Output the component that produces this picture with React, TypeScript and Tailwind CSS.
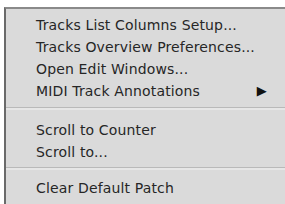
const groups: { label: string; sub?: boolean }[][] = [
  [
    { label: 'Tracks List Columns Setup...' },
    { label: 'Tracks Overview Preferences...' },
    { label: 'Open Edit Windows...' },
    { label: 'MIDI Track Annotations', sub: true },
  ],
  [{ label: 'Scroll to Counter' }, { label: 'Scroll to...' }],
  [{ label: 'Clear Default Patch' }],
];

function Separator({ second }: { second?: boolean }) {
  return (
    <div
      className={
        second
          ? 'h-[3px] mt-[4px] mb-[7px] border-t border-[#b9b9b9] bg-[#e6e6e6]'
          : 'h-[3px] mt-[5px] mb-[9px] border-t border-[#b9b9b9] bg-[#e6e6e6]'
      }
    />
  );
}

export default function App() {
  return (
    <div className="w-[285px] h-[204px] bg-white pt-[7px] pl-[4px] flex overflow-hidden">
      <div
        className="flex-1 bg-[#dadada] border-l-2 border-t-2 border-l-[#6a6a6a] border-t-[#8a8a8a] pt-[5px] text-[#262626]"
        style={{ fontFamily: '"DejaVu Sans", Verdana, sans-serif' }}
      >
        {groups.map((g, gi) => (
          <div key={gi}>
            {gi > 0 && <Separator second={gi === 2} />}
            <div className="flex flex-col">
              {g.map(item => (
                <div
                  key={item.label}
                  className="h-[22px] flex items-center pl-[30px] pr-[18px] text-[14px] tracking-[0.15px] whitespace-nowrap"
                >
                  <span className="flex-1">{item.label}</span>
                  {item.sub && <span className="text-[13px] text-[#111]">▶</span>}
                </div>
              ))}
            </div>
          </div>
        ))}
      </div>
    </div>
  );
}
